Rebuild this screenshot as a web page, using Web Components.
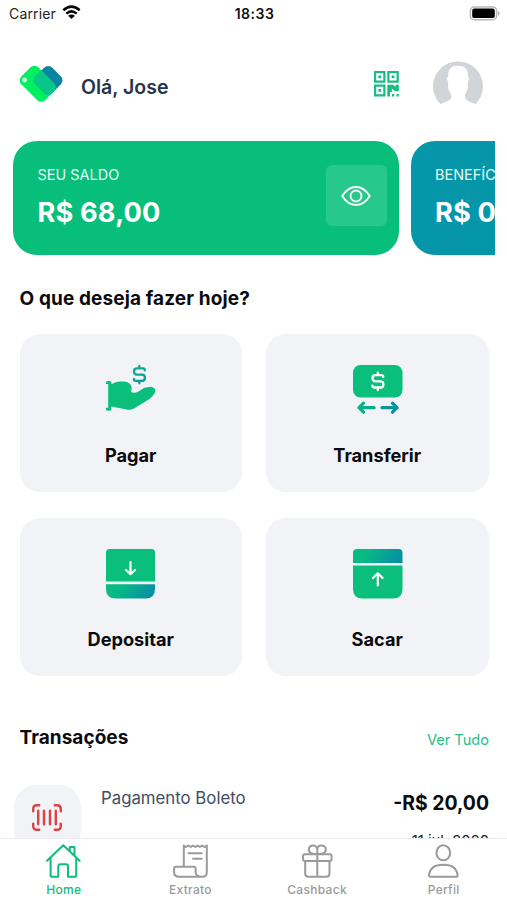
<!DOCTYPE html>
<html lang="pt-BR">
<head>
<meta charset="utf-8">
<title>Home</title>
<style>
html,body{margin:0;height:100%;overflow:hidden;background:#fff;font-family:Inter,"Liberation Sans",sans-serif}
</style>
</head>
<body>
<wallet-app></wallet-app>
<script>
const define = (name, css, html) => customElements.define(name, class extends HTMLElement {
  constructor() {
    super();
    this.attachShadow({ mode: 'open' }).innerHTML =
      '<style>:host{display:block;box-sizing:border-box}*{box-sizing:border-box}svg{display:block;flex:none}' + css + '</style>' +
      (typeof html === 'function' ? html(this) : html);
  }
});

const dollar = (x, y, color) => `<g transform="translate(${x} ${y})" fill="none" stroke="${color}" stroke-width="2.3" stroke-linecap="round" stroke-linejoin="round"><path d="M5.4-4.2V-4.8Q5.4-6.2 3.8-6.2H-2.4Q-5.3-6.2-5.3-3.2T-2.4 0H2.7Q5.6 0 5.6 3.1T2.7 6.2H-3.6Q-5.4 6.2-5.4 4.3M0-8.7V-6.4M0 6.4V8.7"/></g>`;
const grad = (id, x1, y1, x2, y2, a, b) => `<defs><linearGradient id="${id}" gradientUnits="userSpaceOnUse" x1="${x1}" y1="${y1}" x2="${x2}" y2="${y2}"><stop stop-color="${a}"/><stop offset="1" stop-color="${b}"/></linearGradient></defs>`;

const ICONS = {
  pay: grad('a', -8, -10, 10, 10, '#12b686', '#078ca6') +
    dollar(33.3, 9.6, 'url(#a)') +
    '<path fill="#0abf7c" d="M0 17.3C0 15.5 5.4 15.5 5.4 17.3V19C9 17.5 12 16 15.5 16.5Q22 16 24.5 19.5Q26.5 22.5 25 27C30 29.5 34 25 38.5 22.7L45 21.8Q51.5 23.3 48.5 28.5Q46.5 32 42 35L28 43.5Q24.5 45.5 20.5 44.5L5.4 41.5V44.5C5.4 46.3 0 46.3 0 44.5V42.8H2.2V18.9H0Z"/>',
  transfer: grad('a', 5, 0, 46, 8, '#0abf7c', '#0792a2') +
    '<rect y="0" x="0" width="49.5" height="32.5" rx="7.5" fill="#0abf7c"/>' + dollar(24.8, 16.3, '#fff') +
    '<path d="M21 42.7H6M10.5 38.2L6 42.7L10.5 47.2M29 42.7H44M39.5 38.2L44 42.7L39.5 47.2" fill="none" stroke="url(#a)" stroke-width="3.3" stroke-linecap="round" stroke-linejoin="round"/>',
  deposit: grad('a', 17, 34, 43, 51, '#08ba84', '#078fa3') +
    '<path fill="#0abf7c" d="M0 32.6V3.5Q0 0 3.5 0H45.5Q49 0 49 3.5V32.6Z"/><path fill="url(#a)" d="M0 35.2H49V40Q49 49.5 39.5 49.5H9.5Q0 49.5 0 40Z"/>' +
    '<path d="M24.5 13V25M20 21L24.5 25.2L29 21" fill="none" stroke="#fff" stroke-width="2.2" stroke-linecap="round" stroke-linejoin="round"/>',
  withdraw: grad('a', 15, 0, 45, 15, '#08ba84', '#078fa3') +
    '<path fill="url(#a)" d="M0 14V4Q0 0 4 0H45.5Q49.5 0 49.5 4V14Z"/><path fill="#0abf7c" d="M0 16.6H49.5V40Q49.5 49.5 40 49.5H9.5Q0 49.5 0 40Z"/>' +
    '<path d="M24.8 36.5V24.5M20 29L24.8 24.3L29.6 29" fill="none" stroke="#fff" stroke-width="2.2" stroke-linecap="round" stroke-linejoin="round"/>',
  home: '<path d="M1 16.8L17.3 1.3L33.6 16.8M4.6 14.3V32Q4.6 32.8 5.4 32.8H12.3V22.3Q12.3 20.3 14.3 20.3H20Q22 20.3 22 22.3V32.8H29.4Q30.2 32.8 30.2 32V14.3M23.8 7.2V3H28.5V11.6"/>',
  receipt: '<path d="M10.8 22.8V1.5M33.8 1.5V28Q33.8 32.8 29.5 32.8H6Q1.1 32.8 1.1 28V24.5Q1.1 22.8 3 22.8H21Q22.6 22.8 22.6 24.5V27.5Q22.6 32.8 28.5 32.8M15.5 9.3H28.7M20 14.8H28.7M10.8 1.5L13.1 3L15.4 1.5L17.7 3L20 1.5L22.3 3L24.6 1.5L26.9 3L29.2 1.5L31.5 3L33.8 1.5"/>',
  gift: '<rect x="3" y="10.2" width="28.6" height="6.8" rx="2"/><path d="M5.2 17V29.5Q5.2 32.8 8.5 32.8H26.2Q29.5 32.8 29.5 29.5V17M17.3 6V32.8M17.3 10C12 10.5 8.5 8.8 8.8 5.2C9.2.6 17.3-.2 17.3 6M17.3 10C22.6 10.5 26.1 8.8 25.8 5.2C25.4.6 17.3-.2 17.3 6"/>',
  person: '<ellipse cx="17.3" cy="8.8" rx="6.9" ry="7.5"/><path d="M4.5 32.8Q3 32.8 3 31.3C3.7 24.8 8 20.7 17.3 20.7S30.9 24.8 31.6 31.3Q31.6 32.8 30.1 32.8Z"/>'
};

define('status-bar', `:host{display:flex;height:27.5px;padding:0 7px 0 9px;align-items:center;color:#222}
  .side{flex:1;display:flex;align-items:center;gap:6px;font-size:14px;letter-spacing:.15px}
  b{font-size:14px;font-weight:600;letter-spacing:.5px;color:#111} .end{justify-content:flex-end}`,
  `<div class="side"><span>Carrier</span><svg width="19" height="15" viewBox="0 0 19 15" style="margin-top:-2px" fill="none" stroke="#000" stroke-width="2.5"><path d="M1.3 5.3Q9.5-2 17.7 5.3M4.3 8.6Q9.5 4.2 14.7 8.6"/><path d="M6.2 10.7Q9.5 8.2 12.8 10.7L9.5 14Z" fill="#000" stroke="none"/></svg></div>
   <b>18:33</b>
   <div class="side end"><svg width="31" height="15" viewBox="0 0 31 15" style="margin-top:-1px"><rect x="1.4" y=".9" width="26.2" height="12.8" rx="3.8" fill="#fff" stroke="#b8b8b8" stroke-width="1.5"/><rect x="3.2" y="2.6" width="22.6" height="9.5" rx="2.2"/><path d="M29 4.8Q32 7.3 29 9.9Z" fill="#a7a7a7"/></svg></div>`);

define('app-header', `:host{display:flex;align-items:center;height:60px;margin-top:28px;padding:0 24px 0 19px}
  h1{font-size:19.5px;font-weight:600;color:#26334d;margin:3px auto 0 18px;line-height:28px}
  .logo{margin-top:-4px}.qr{margin:-3px 34px 0 0}`,
  `<svg class="logo" width="44" height="38" viewBox="0 0 44 38"><defs><clipPath id="c"><rect x="-16.75" y="-12" width="33.5" height="24" rx="5.5" transform="translate(18.8 18.8) rotate(45)"/></clipPath></defs>
   <rect x="-16.75" y="-12" width="33.5" height="24" rx="5.5" transform="translate(18.8 18.8) rotate(45)" fill="#00ef61"/>
   <rect x="-11.75" y="-11.75" width="23.5" height="23.5" rx="5.5" transform="translate(29.2 15.3) rotate(45)" fill="#05859f"/>
   <g clip-path="url(#c)"><rect x="-12" y="-12" width="24" height="24" rx="5.5" transform="translate(29.2 15.3) rotate(45)" fill="#08c588"/></g><circle cx="5.6" cy="15" r="2.4" fill="#dfffea"/></svg>
   <h1>Olá, Jose</h1>
   <svg class="qr" width="25" height="26" viewBox="0 0 25 26" fill="#1abc83"><path fill-rule="evenodd" d="M0 0H11.5V11.8H0ZM2.2 2.2V9.6H9.3V2.2ZM13.3 0H24.8V11.8H13.3ZM15.5 2.2V9.6H22.6V2.2ZM0 13.5H11.5V25.5H0ZM2.2 15.7V23.2H9.3V15.7ZM4.4 4.5H7.1V7.3H4.4ZM17.7 4.5H20.4V7.3H17.7ZM4.4 18H7.1V20.8H4.4ZM13.3 13.8H19.3L21.5 16V13.8H24.8V20.3H21L17.8 17.5V21H16V25.5H13.3ZM18 23H20.2V25.5H18ZM22.5 23H24.8V25.5H22.5Z"/></svg>
   <svg width="50" height="50" viewBox="0 0 50 50"><path fill="#d1d5d9" d="M7.4 43.2A25 25 0 1 1 42.6 43.2C37.5 40.5 31.6 40 32 35.2C32 32 35 30 34.9 25V21L36.3 17.5L34.9 15.5C35 8 32 5 25.5 4.8C18.5 4 15 8 15.1 15.5L13.7 17.5L15.1 21V25C15 30 18.4 32 18.3 35.2C18.5 40 12.5 40.5 7.4 43.2Z"/></svg>`);

define('balance-card', `:host{flex:none;width:385.5px;height:113.5px;border-radius:24px;background:var(--card);color:#fff;padding:24px 12px 0 24.5px;display:flex;justify-content:space-between}
  .l{font-size:14.4px;line-height:20px;letter-spacing:.05px;white-space:nowrap;color:#e4fff5} .v{font-size:27.2px;line-height:36px;font-weight:700;margin-top:10px;white-space:nowrap;letter-spacing:.15px}
  .l,.v{display:block}`,
  `<div><span class="l"><slot name="label"></slot></span><span class="v"><slot></slot></span></div><slot name="action"></slot>`);

define('eye-button', `:host{width:61px;height:61px;border-radius:6px;background:#26c88c;display:grid;place-items:center}`,
  `<svg width="30" height="20" viewBox="0 0 30 20" fill="none" stroke="#fff" stroke-width="1.8"><path d="M1.2 10Q7 1 15 1T28.8 10Q23 19 15 19T1.2 10Z"/><circle cx="15" cy="10" r="5.5"/></svg>`);

define('action-tile', `:host{display:flex;flex-direction:column;align-items:center;height:158px;border-radius:20px;background:#f1f3f7;padding-top:31px;color:#0b0b0f}
  span{font-size:18.2px;font-weight:650;line-height:24px;margin-top:27px}`,
  el => `<svg width="49.5" height="51" viewBox="0 0 49.5 51" overflow="visible">${ICONS[el.getAttribute('icon')]}</svg><span><slot></slot></span>`);

define('transaction-row', `:host{display:flex;padding:0 18px 0 13.5px;margin-top:34px}
  .i{width:67px;height:67px;flex:none;border-radius:22px;background:#f1f3f7;display:grid;place-items:center;padding-bottom:3px}
  .n{font-size:16.8px;line-height:22px;color:#414d63;margin:2px auto 0 20.5px;white-space:nowrap}
  .r{text-align:right;display:flex;flex-direction:column;align-items:flex-end} .a{font-size:19.4px;font-weight:700;line-height:26px;margin-top:5px;color:#0b0b0f}.d{font-size:14.8px;line-height:20px;margin-top:15px;color:#222}`,
  `<div class="i"><svg width="30" height="27" viewBox="0 0 30 27" fill="none" stroke="#d94346" stroke-width="2.4" stroke-linecap="round"><path d="M1.2 7.2V5Q1.2 1.2 5 1.2H7.2M22.8 1.2H25Q28.8 1.2 28.8 5V7.2M1.2 19.8V22Q1.2 25.8 5 25.8H7.2M22.8 25.8H25Q28.8 25.8 28.8 22V19.8"/><path d="M6.2 6.7V20.3M12 6.7V20.3M18 6.7V20.3M23.8 6.7V20.3"/></svg></div>
   <span class="n"><slot></slot></span><div class="r"><span class="a"><slot name="amount"></slot></span><span class="d"><slot name="date"></slot></span></div>`);

define('tab-item', `:host{flex:1;display:flex;flex-direction:column;align-items:center;padding-top:5px;color:#9a9a9a}
  :host([active]){color:#11bb7b} svg{stroke:currentColor;fill:none;stroke-width:2;stroke-linejoin:round;stroke-linecap:round}
  span{font-size:12px;font-weight:500;line-height:16px;margin-top:4px;letter-spacing:.3px}`,
  el => `<svg width="35" height="34" viewBox="0 0 35 34">${ICONS[el.getAttribute('icon')]}</svg><span><slot></slot></span>`);

define('tab-bar', `:host{display:flex;flex:none;height:62px;padding-left:.5px;background:#fff;border-top:1px solid #e9eaec}`, `<slot></slot>`);

define('wallet-app', `:host{display:flex;flex-direction:column;width:507px;height:900px;background:#fff}
  main{flex:1;min-height:0;overflow:hidden}
  .cards{display:flex;gap:12px;margin:25.5px 12px 0 13px;overflow:hidden}
  h2{font-size:19px;font-weight:650;line-height:26px;margin:0;color:#0b0b0f;letter-spacing:.05px}
  .q{margin:31px 0 0 19.5px;letter-spacing:.12px}
  .grid{display:grid;grid-template-columns:1fr 1fr;gap:26px 24px;margin:22px 18.5px 0 19.5px}
  .head{display:flex;justify-content:space-between;align-items:center;margin:49.5px 18px 0 19.5px}
  .head a{font-size:14.6px;line-height:20px;color:#24be86;margin-top:3px}`,
  `<main><status-bar></status-bar><app-header></app-header>
   <div class="cards"><balance-card style="--card:#07bf7b"><span slot="label">SEU SALDO</span>R$ 68,00<eye-button slot="action"></eye-button></balance-card>
   <balance-card style="--card:#0696a9"><span slot="label">BENEFÍCIOS</span>R$ 0,00</balance-card></div>
   <h2 class="q">O que deseja fazer hoje?</h2>
   <div class="grid"><action-tile icon="pay">Pagar</action-tile><action-tile icon="transfer">Transferir</action-tile><action-tile icon="deposit">Depositar</action-tile><action-tile icon="withdraw">Sacar</action-tile></div>
   <div class="head"><h2>Transações</h2><a>Ver Tudo</a></div>
   <transaction-row>Pagamento Boleto<span slot="amount">-R$ 20,00</span><span slot="date">11 jul, 2020</span></transaction-row></main>
   <tab-bar><tab-item icon="home" active>Home</tab-item><tab-item icon="receipt">Extrato</tab-item><tab-item icon="gift">Cashback</tab-item><tab-item icon="person">Perfil</tab-item></tab-bar>`);
</script>
</body>
</html>
